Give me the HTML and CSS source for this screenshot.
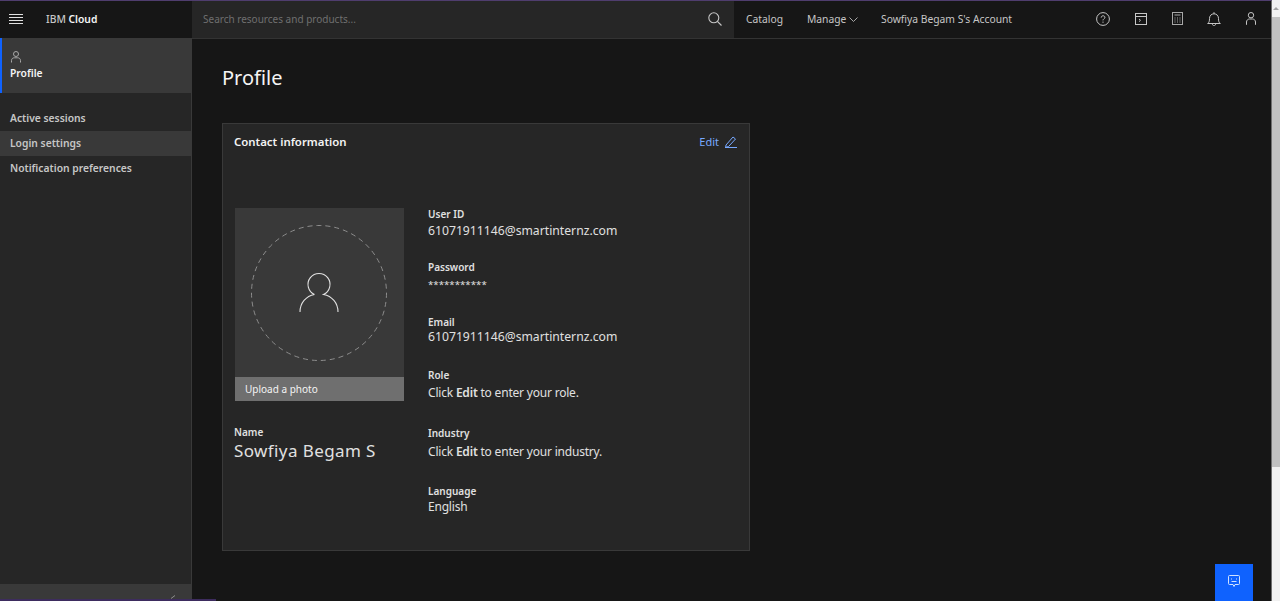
FILE: index.html
```html
<!DOCTYPE html>
<html lang="en">
<head>
    <meta charset="UTF-8">
    <title>Profile - IBM Cloud</title>
    <link rel="stylesheet" href="styles.css">
</head>
<body>

<div class="window">
    <!-- Top bar -->
    <header class="topbar">
        <div class="brand">
            <svg class="menu-icon" width="14" height="10" viewBox="0 0 14 10" fill="none" stroke="#e0e0e0" stroke-width="1">
                <path d="M0 .5h14M0 3.500h14M0 6.500h14M0 9.500h14"/>
            </svg>
            <span class="brand-name">IBM <b>Cloud</b></span>
        </div>
        <div class="search">
            <span class="search-text">Search resources and products...</span>
            <svg width="14" height="14" viewBox="0 0 14 14" fill="none" stroke="#c6c6c6" stroke-width="1.100">
                <circle cx="5.800" cy="5.800" r="5"/>
                <path d="M9.400 9.400L13.500 13.500"/>
            </svg>
        </div>
        <nav class="topnav">
            <span class="topnav-catalog">Catalog</span>
            <span class="topnav-manage">Manage
                <svg width="9" height="5" viewBox="0 0 9 5" fill="none" stroke="#a8a8a8">
                    <path d="M.5 .5l4 4 4-4"/>
                </svg>
            </span>
            <span>Sowfiya Begam S's Account</span>
        </nav>
        <div class="tools">
            <svg width="14" height="14" viewBox="0 0 14 14" fill="none" stroke="#c6c6c6">
                <circle cx="7" cy="7" r="6.400"/>
                <path d="M5.200 5.600c0-2.400 3.700-2.400 3.700-.2 0 1.400-1.900 1.400-1.900 3"/>
                <path d="M7 9.600v1.200"/>
            </svg>
            <svg width="12" height="12" viewBox="0 0 12 12" fill="none" stroke="#c6c6c6">
                <rect x=".5" y=".5" width="11" height="11"/>
                <path d="M.5 3.500h11M4 6l1.500 1.300L4 8.600"/>
            </svg>
            <svg width="11" height="13" viewBox="0 0 11 13" fill="none" stroke="#a8a8a8">
                <rect x=".5" y=".5" width="10" height="12"/>
                <path d="M2.500 3h6M2.500 6h1M5 6h1M7.500 6h1M2.500 8h1M5 8h1M7.500 8h1M2.500 10h1M5 10h1M7.500 10h1"/>
            </svg>
            <svg width="14" height="14" viewBox="0 0 14 14" fill="none" stroke="#c6c6c6">
                <path d="M.7 11.500c1.500-1.200 1.800-2.400 1.800-5 0-2.800 1.900-4.700 4.500-4.700s4.500 1.900 4.500 4.700c0 2.600.3 3.800 1.800 5z"/>
                <path d="M7 .2v1.600M5.300 11.500c0 3 3.400 3 3.400 0"/>
            </svg>
            <svg width="10" height="13" viewBox="0 0 10 13" fill="none" stroke="#c6c6c6">
                <circle cx="5" cy="3.200" r="2.700"/>
                <path d="M.5 12.800V10c0-1.800 1.500-3 3-3h3c1.500 0 3 1.200 3 3v2.800"/>
            </svg>
        </div>
    </header>

    <div class="body-row">
        <!-- Side navigation -->
        <aside class="sidebar">
            <div class="side-head">
                <svg width="10" height="12" viewBox="0 0 10 12" fill="none" stroke="#a8a8a8">
                    <circle cx="5" cy="3" r="2.500"/>
                    <path d="M.5 11.500V9.500c0-1.700 1.300-2.700 2.800-2.700h3.400c1.500 0 2.800 1 2.800 2.700v2"/>
                </svg>
                <span>Profile</span>
            </div>
            <ul class="side-list">
                <li>Active sessions</li>
                <li class="side-hover">Login settings</li>
                <li>Notification preferences</li>
            </ul>
            <div class="side-foot">
                <svg width="5" height="4" viewBox="0 0 5 4" fill="none" stroke="#8d8d8d">
                    <path d="M0 3.500L4 .5"/>
                </svg>
            </div>
        </aside>

        <!-- Main content -->
        <main class="content">
            <h1 class="page-title">Profile</h1>
            <section class="card">
                <div class="card-head">
                    <h2>Contact information</h2>
                    <a class="edit-link">Edit
                        <svg width="12" height="12" viewBox="0 0 12 12" fill="none" stroke="#78a9ff">
                            <path d="M1 9l7-8 2.500 2-7 7.600-2.800.6zM0 11.500h12"/>
                        </svg>
                    </a>
                </div>
                <div class="card-body">
                    <div class="left-col">
                        <div class="photo">
                            <div class="photo-area">
                                <svg width="136" height="136" viewBox="0 0 136 136" fill="none">
                                    <circle cx="68" cy="68" r="67.500" stroke="#8d8d8d" stroke-dasharray="5 4"/>
                                    <path d="M63.500 69.500A11 11 0 1 1 72.500 69.500C81 71 87 78 87 87M63.500 69.500C55 71 49 78 49 87" stroke="#e0e0e0" stroke-width="1.100"/>
                                </svg>
                            </div>
                            <div class="photo-caption">Upload a photo</div>
                        </div>
                        <div class="name-label">Name</div>
                        <div class="name-value">Sowfiya Begam S</div>
                    </div>
                    <div class="fields">
                        <div class="field field-userid">
                            <div class="field-label">User ID</div>
                            <div class="field-value field-email-text">61071911146@smartinternz.com</div>
                        </div>
                        <div class="field field-password">
                            <div class="field-label">Password</div>
                            <div class="field-value field-mask">***********</div>
                        </div>
                        <div class="field field-email">
                            <div class="field-label">Email</div>
                            <div class="field-value field-email-text">61071911146@smartinternz.com</div>
                        </div>
                        <div class="field field-role">
                            <div class="field-label">Role</div>
                            <div class="field-value">Click <b>Edit</b> to enter your role.</div>
                        </div>
                        <div class="field field-industry">
                            <div class="field-label">Industry</div>
                            <div class="field-value">Click <b>Edit</b> to enter your industry.</div>
                        </div>
                        <div class="field">
                            <div class="field-label">Language</div>
                            <div class="field-value">English</div>
                        </div>
                    </div>
                </div>
            </section>
        </main>
    </div>

    <!-- Chat button -->
    <button class="chat-btn" type="button" aria-label="Chat">
        <svg width="12" height="13" viewBox="0 0 12 13" fill="none" stroke="#d0e2ff">
            <path d="M1.500 .5h9a1 1 0 0 1 1 1v7a1 1 0 0 1-1 1H7l-1 2-1-2H1.500a1 1 0 0 1-1-1v-7a1 1 0 0 1 1-1z"/>
            <path d="M3.500 3.500v1M8.500 3.500v1M3.500 6.500h5"/>
        </svg>
    </button>

    <div class="bottom-line"></div>
</div>

<!-- Browser scrollbar -->
<div class="scrollbar">
    <div class="scroll-arrow"></div>
    <div class="scroll-thumb"></div>
</div>

</body>
</html>
```

FILE: styles.css
```css
* {
    box-sizing: border-box;
}

html, body {
    height: 100%;
}

body {
    margin: 0;
    display: flex;
    overflow: hidden;
    background-color: #161616;
    color: #f4f4f4;
    font-family: "Noto Sans", "Liberation Sans", sans-serif;
}

.window {
    position: relative;
    flex: 1;
    display: flex;
    flex-direction: column;
    min-width: 0;
    border-top: 1px solid #4f3d6e;
    border-right: 1px solid #6f6f6f;
}

/* Top bar */
.topbar {
    display: flex;
    height: 37px;
    flex: none;
    font-size: 10.300px;
    color: #c6c6c6;
}

.brand {
    width: 192px;
    display: flex;
    align-items: center;
    padding: 0 0 2px 9px;
    gap: 23px;
    background-color: #161616;
}

.brand-name {
    color: #c6c6c6;
    font-weight: 500;
}

.brand-name b {
    color: #f4f4f4;
    font-weight: 600;
}

.search {
    width: 542px;
    display: flex;
    align-items: center;
    justify-content: space-between;
    padding: 0 12px 2px 11px;
    background-color: #262626;
    color: #6f6f6f;
    font-size: 10px;
}

.topnav {
    display: flex;
    align-items: center;
    padding: 0 0 2px 12px;
}

.topnav-catalog {
    margin-right: 24px;
}

.topnav-manage {
    margin-right: 23px;
}

.topnav-manage svg {
    vertical-align: 1px;
}

.tools {
    margin-left: auto;
    width: 175px;
    display: flex;
    align-items: center;
    justify-content: space-between;
    padding: 0 15px 2px 0;
}

.body-row {
    flex: 1;
    display: flex;
    min-height: 0;
}

/* Side navigation */
.sidebar {
    width: 192px;
    flex: none;
    display: flex;
    flex-direction: column;
    background-color: #262626;
    border-right: 1px solid #393939;
    font-size: 10.300px;
    font-weight: 600;
    color: #c6c6c6;
}

.side-head {
    height: 55px;
    padding: 13px 0 0 8px;
    display: flex;
    flex-direction: column;
    gap: 3px;
    background-color: #393939;
    border-left: 2px solid #0f62fe;
    color: #f4f4f4;
    align-items: flex-start;
}

.side-head svg {
    margin-left: 1px;
}

.side-list {
    list-style: none;
    margin: 13px 0 0;
    padding: 0;
    flex: 1;
}

.side-list li {
    height: 25px;
    line-height: 25px;
    padding-left: 10px;
}

.side-hover {
    background-color: #393939;
}

.side-foot {
    height: 15px;
    margin-bottom: 2px;
    padding-right: 15px;
    display: flex;
    align-items: flex-end;
    justify-content: flex-end;
    background-color: #393939;
}

/* Main content */
.content {
    flex: 1;
    padding: 0 0 0 30px;
    border-top: 1px solid #333333;
}

.page-title {
    margin: 25px 0 0;
    font-size: 20px;
    line-height: 28px;
    font-weight: 400;
}

.card {
    width: 528px;
    height: 428px;
    margin-top: 31px;
    padding: 9px 12px 0;
    background-color: #262626;
    border: 1px solid #393939;
}

.card-head {
    display: flex;
    justify-content: space-between;
    align-items: center;
}

.card-head h2 {
    margin: 0 0 0 -1px;
    font-size: 11.400px;
    line-height: 17px;
    font-weight: 600;
}

.edit-link {
    display: flex;
    align-items: center;
    gap: 6px;
    font-size: 11px;
    color: #78a9ff;
}

.card-body {
    display: flex;
    margin-top: 58px;
}

.left-col {
    width: 193px;
}

.photo {
    width: 169px;
    height: 193px;
    display: flex;
    flex-direction: column;
    background-color: #393939;
}

.photo-area {
    flex: 1;
    padding: 17px 0 0 16px;
}

.photo-area svg {
    display: block;
}

.photo-caption {
    height: 24px;
    line-height: 24px;
    padding-left: 10px;
    font-size: 10px;
    background-color: #6f6f6f;
}

.name-label {
    margin: 24px 0 0 -1px;
    font-size: 10px;
    line-height: 14px;
    font-weight: 600;
    color: #e0e0e0;
}

.name-value {
    margin-left: -1px;
    font-size: 17px;
    line-height: 24px;
    letter-spacing: .4px;
    color: #e0e0e0;
}

/* Contact fields */
.fields {
    flex: 1;
    margin-top: -1px;
}

.field-label {
    font-size: 10px;
    line-height: 14px;
    font-weight: 600;
    color: #e0e0e0;
}

.field-value {
    font-size: 12px;
    line-height: 17px;
    letter-spacing: -.2px;
    color: #e0e0e0;
}

.field-value b {
    font-weight: 600;
}

.field-email-text {
    font-size: 12.200px;
    letter-spacing: 0;
}

.field-userid {
    margin-bottom: 21px;
}

.field-userid .field-value {
    margin-top: 1px;
}

.field-password {
    margin-bottom: 22px;
}

.field-mask {
    margin-top: 2px;
    font-size: 9.700px;
    letter-spacing: 0;
}

.field-email {
    margin-bottom: 23px;
}

.field-email .field-value {
    margin-top: -1px;
}

.field-role {
    margin-bottom: 25px;
}

.field-role .field-value {
    margin-top: 2px;
}

.field-industry {
    margin-bottom: 24px;
}

.field-industry .field-value {
    margin-top: 3px;
}

/* Overlays */
.chat-btn {
    position: absolute;
    right: 18px;
    bottom: 0;
    width: 38px;
    height: 37px;
    padding: 0;
    border: none;
    background-color: #0f62fe;
}

.bottom-line {
    position: absolute;
    left: 0;
    bottom: 0;
    width: 216px;
    height: 2px;
    background-color: #3d2c5e;
}

/* Browser scrollbar */
.scrollbar {
    width: 8px;
    flex: none;
    background-color: #f1f1f1;
}

.scroll-arrow {
    height: 17px;
    position: relative;
}

.scroll-arrow::after {
    content: "";
    position: absolute;
    top: 7px;
    left: 1px;
    border-left: 3px solid transparent;
    border-right: 3px solid transparent;
    border-bottom: 3px solid #a3a3a3;
}

.scroll-thumb {
    height: 450px;
    background-color: #c1c1c1;
}
```
